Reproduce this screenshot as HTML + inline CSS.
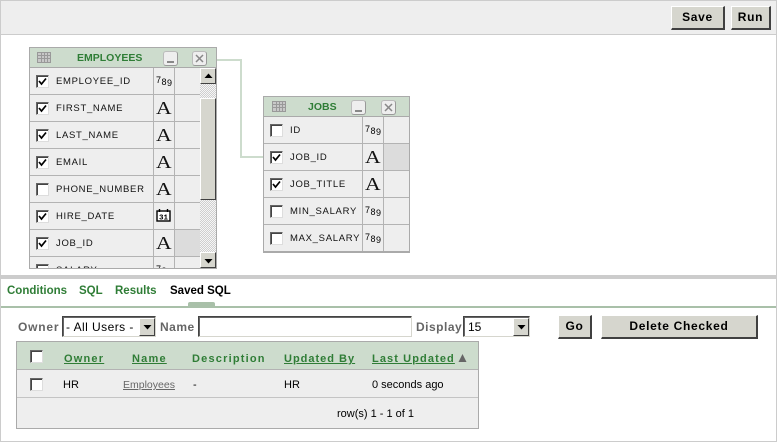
<!DOCTYPE html>
<html><head><meta charset="utf-8">
<style>
html,body{margin:0;padding:0;background:#fff}
#p{position:relative;width:777px;height:442px;overflow:hidden;background:#fff;font-family:"Liberation Sans",sans-serif;font-size:11px;color:#000}
#p div,#p span.a,#p svg{position:absolute}
.t{white-space:nowrap;line-height:12px}
.btn{background:#d6d6ce;border-top:1px solid #fff;border-left:1px solid #fff;border-right:2px solid #404040;border-bottom:2px solid #404040;box-sizing:border-box;text-align:center;font-weight:bold;font-size:12px;letter-spacing:.7px;color:#000}
.cb{width:13px;height:13px;box-sizing:border-box;background:#fff;border-top:1px solid #666;border-left:1px solid #666;border-right:1px solid #ddd;border-bottom:1px solid #ddd;box-shadow:inset 1px 1px 0 #444}
.cn{font-size:9.5px;letter-spacing:.7px;color:#111}
.A{font-family:"Liberation Serif",serif;font-size:18px;line-height:20px;color:#111;transform:translateY(-1px) scaleX(1.2);transform-origin:left top}
.n{font-size:9px;color:#000;letter-spacing:.5px}
.n span{position:relative}
.n span.s{top:-2px}
.n span.d{top:1px}
.tab{font-weight:bold;font-size:11.5px;color:#2f7d36}
.th{font-weight:bold;font-size:11px;letter-spacing:1.2px;color:#2f7d36}
.u{text-decoration:underline}
.dith{background-image:repeating-conic-gradient(#cfcfcf 0 25%,#f6f6f6 0 50%);background-size:2px 2px}
.sb{background:#d6d6ce;border-top:1px solid #fff;border-left:1px solid #fff;border-right:1px solid #404040;border-bottom:1px solid #404040;box-sizing:border-box}
.ms{background:#eee;border:1px solid #bbb;border-right-color:#999;border-bottom-color:#999;border-radius:3px;box-sizing:border-box}
.inp{box-sizing:border-box;background:#fff;border-top:1px solid #444;border-left:1px solid #444;border-right:1px solid #d6d6ce;border-bottom:1px solid #d6d6ce;box-shadow:inset 1px 1px 0 #666}
.lb{font-weight:bold;font-size:12px;letter-spacing:.5px;color:#666}
</style></head><body><div id="p">

<!-- outer -->
<div style="left:0;top:0;width:777px;height:35px;background:#eee"></div>
<div style="left:0;top:0;width:777px;height:1px;background:#ccc"></div>
<div style="left:0;top:34px;width:777px;height:1px;background:#ccc"></div>
<div style="left:0;top:0;width:1px;height:442px;background:#ccc"></div>
<div style="left:776px;top:0;width:1px;height:442px;background:#ccc"></div>
<div style="left:0;top:441px;width:777px;height:1px;background:#ccc"></div>

<div class="btn" style="left:671px;top:6px;width:54px;height:24px;line-height:21px">Save</div>
<div class="btn" style="left:731px;top:6px;width:40px;height:24px;line-height:21px">Run</div>

<!-- connector -->
<div style="left:217px;top:59px;width:25px;height:2px;background:#cddccd"></div>
<div style="left:240px;top:59px;width:2px;height:99px;background:#cddccd"></div>
<div style="left:240px;top:156px;width:24px;height:2px;background:#cddccd"></div>

<!-- EMPLOYEES -->
<div style="left:29px;top:47px;width:188px;height:222px;background:#eee;overflow:hidden;box-sizing:border-box;border:1px solid #aaa">
 <div style="left:0;top:0;width:186px;height:19px;background:#cddccd"></div>
 <div style="left:0;top:19px;width:186px;height:1px;background:#aaa"></div>
 <div style="left:0;top:46px;width:170px;height:1px;background:#b3b3b3"></div>
 <div style="left:0;top:73px;width:170px;height:1px;background:#b3b3b3"></div>
 <div style="left:0;top:100px;width:170px;height:1px;background:#b3b3b3"></div>
 <div style="left:0;top:127px;width:170px;height:1px;background:#b3b3b3"></div>
 <div style="left:0;top:154px;width:170px;height:1px;background:#b3b3b3"></div>
 <div style="left:0;top:181px;width:170px;height:1px;background:#b3b3b3"></div>
 <div style="left:0;top:208px;width:170px;height:1px;background:#b3b3b3"></div>
 <div style="left:123px;top:20px;width:1px;height:200px;background:#b3b3b3"></div>
 <div style="left:144px;top:20px;width:1px;height:200px;background:#b3b3b3"></div>
 <div style="left:145px;top:182px;width:25px;height:26px;background:#dcdcdc"></div>

 <svg style="left:7px;top:4px" width="14" height="11" viewBox="0 0 14 11"><rect x=".5" y=".5" width="13" height="10" fill="#c8c8c8" stroke="#999"/><path d="M1 3.5H13M1 6.5H13M4.5 1V10M7.5 1V10M10.5 1V10" stroke="#999"/></svg>
 <div class="t" style="left:47px;top:4px;font-weight:bold;font-size:10.5px;color:#2f7d36">EMPLOYEES</div>
 <div class="ms" style="left:133px;top:3px;width:15px;height:15px"><div style="left:3px;top:9px;width:7px;height:2px;background:#888"></div></div>
 <div class="ms" style="left:162px;top:3px;width:15px;height:15px"><svg style="left:2px;top:2px" width="10" height="9"><path d="M1 1L8 8M8 1L1 8" stroke="#888" stroke-width="1.5"/></svg></div>

 <!-- rows -->
 <div style="left:0;top:1px;width:170px;height:220px">
 <div class="cb" style="left:6px;top:26px"></div><svg style="left:6px;top:26px" width="13" height="13"><path d="M3 6L5.5 9L10 3.5" stroke="#000" stroke-width="1.7" fill="none"/></svg>
 <div class="t cn" style="left:26px;top:27px">EMPLOYEE_ID</div><div class="t n" style="left:126px;top:27px"><span class="s">7</span>8<span class="d">9</span></div>

 <div class="cb" style="left:6px;top:53px"></div><svg style="left:6px;top:53px" width="13" height="13"><path d="M3 6L5.5 9L10 3.5" stroke="#000" stroke-width="1.7" fill="none"/></svg>
 <div class="t cn" style="left:26px;top:54px">FIRST_NAME</div><div class="t A" style="left:126px;top:50px">A</div>

 <div class="cb" style="left:6px;top:80px"></div><svg style="left:6px;top:80px" width="13" height="13"><path d="M3 6L5.5 9L10 3.5" stroke="#000" stroke-width="1.7" fill="none"/></svg>
 <div class="t cn" style="left:26px;top:81px">LAST_NAME</div><div class="t A" style="left:126px;top:77px">A</div>

 <div class="cb" style="left:6px;top:107px"></div><svg style="left:6px;top:107px" width="13" height="13"><path d="M3 6L5.5 9L10 3.5" stroke="#000" stroke-width="1.7" fill="none"/></svg>
 <div class="t cn" style="left:26px;top:108px">EMAIL</div><div class="t A" style="left:126px;top:104px">A</div>

 <div class="cb" style="left:6px;top:134px"></div>
 <div class="t cn" style="left:26px;top:135px">PHONE_NUMBER</div><div class="t A" style="left:126px;top:131px">A</div>

 <div class="cb" style="left:6px;top:161px"></div><svg style="left:6px;top:161px" width="13" height="13"><path d="M3 6L5.5 9L10 3.5" stroke="#000" stroke-width="1.7" fill="none"/></svg>
 <div class="t cn" style="left:26px;top:162px">HIRE_DATE</div>
 <svg style="left:126px;top:160px" width="15" height="13" viewBox="0 0 15 13"><rect x="1" y="2" width="13" height="10" fill="#fff" stroke="#000" stroke-width="1.4"/><path d="M3.5 0V3M11.5 0V3" stroke="#000" stroke-width="1.4"/><text x="7.5" y="10.5" font-family="Liberation Mono" font-size="7.5" font-weight="bold" text-anchor="middle">31</text></svg>

 <div class="cb" style="left:6px;top:188px"></div><svg style="left:6px;top:188px" width="13" height="13"><path d="M3 6L5.5 9L10 3.5" stroke="#000" stroke-width="1.7" fill="none"/></svg>
 <div class="t cn" style="left:26px;top:189px">JOB_ID</div><div class="t A" style="left:126px;top:185px">A</div>

 <div class="cb" style="left:6px;top:215px"></div>
 <div class="t cn" style="left:26px;top:216px">SALARY</div><div class="t n" style="left:126px;top:216px"><span class="s">7</span>8<span class="d">9</span></div>
 </div>

 <!-- scrollbar -->
 <div class="dith" style="left:170px;top:20px;width:16px;height:200px"></div>
 <div class="sb" style="left:170px;top:20px;width:16px;height:16px"><svg style="left:3px;top:4px" width="9" height="6"><path d="M4.5 0.5L8.5 5H0.5Z" fill="#000"/></svg></div>
 <div class="sb" style="left:170px;top:50px;width:16px;height:102px"></div>
 <div class="sb" style="left:170px;top:204px;width:16px;height:16px"><svg style="left:3px;top:5px" width="9" height="6"><path d="M4.5 5.5L8.5 1H0.5Z" fill="#000"/></svg></div>
</div>

<!-- JOBS -->
<div style="left:263px;top:96px;width:147px;height:157px;background:#eee;overflow:hidden;box-sizing:border-box;border:1px solid #aaa;border-bottom:2px solid #aaa">
 <div style="left:0;top:0;width:145px;height:19px;background:#cddccd"></div>
 <div style="left:0;top:19px;width:145px;height:1px;background:#aaa"></div>
 <div style="left:0;top:46px;width:145px;height:1px;background:#b3b3b3"></div>
 <div style="left:0;top:73px;width:145px;height:1px;background:#b3b3b3"></div>
 <div style="left:0;top:100px;width:145px;height:1px;background:#b3b3b3"></div>
 <div style="left:0;top:127px;width:145px;height:1px;background:#b3b3b3"></div>
 <div style="left:98px;top:20px;width:1px;height:140px;background:#b3b3b3"></div>
 <div style="left:119px;top:20px;width:1px;height:140px;background:#b3b3b3"></div>
 <div style="left:120px;top:47px;width:25px;height:26px;background:#dcdcdc"></div>

 <svg style="left:8px;top:4px" width="14" height="11" viewBox="0 0 14 11"><rect x=".5" y=".5" width="13" height="10" fill="#c8c8c8" stroke="#999"/><path d="M1 3.5H13M1 6.5H13M4.5 1V10M7.5 1V10M10.5 1V10" stroke="#999"/></svg>
 <div class="t" style="left:44px;top:4px;font-weight:bold;font-size:10.5px;color:#2f7d36">JOBS</div>
 <div class="ms" style="left:87px;top:3px;width:15px;height:15px"><div style="left:3px;top:9px;width:7px;height:2px;background:#888"></div></div>
 <div class="ms" style="left:117px;top:3px;width:15px;height:15px"><svg style="left:2px;top:2px" width="10" height="9"><path d="M1 1L8 8M8 1L1 8" stroke="#888" stroke-width="1.5"/></svg></div>

 <div style="left:0;top:1px;width:145px;height:155px">
 <div class="cb" style="left:6px;top:26px"></div>
 <div class="t cn" style="left:26px;top:27px">ID</div><div class="t n" style="left:101px;top:27px"><span class="s">7</span>8<span class="d">9</span></div>

 <div class="cb" style="left:6px;top:53px"></div><svg style="left:6px;top:53px" width="13" height="13"><path d="M3 6L5.5 9L10 3.5" stroke="#000" stroke-width="1.7" fill="none"/></svg>
 <div class="t cn" style="left:26px;top:54px">JOB_ID</div><div class="t A" style="left:101px;top:50px">A</div>

 <div class="cb" style="left:6px;top:80px"></div><svg style="left:6px;top:80px" width="13" height="13"><path d="M3 6L5.5 9L10 3.5" stroke="#000" stroke-width="1.7" fill="none"/></svg>
 <div class="t cn" style="left:26px;top:81px">JOB_TITLE</div><div class="t A" style="left:101px;top:77px">A</div>

 <div class="cb" style="left:6px;top:107px"></div>
 <div class="t cn" style="left:26px;top:108px">MIN_SALARY</div><div class="t n" style="left:101px;top:108px"><span class="s">7</span>8<span class="d">9</span></div>

 <div class="cb" style="left:6px;top:134px"></div>
 <div class="t cn" style="left:26px;top:135px">MAX_SALARY</div><div class="t n" style="left:101px;top:135px"><span class="s">7</span>8<span class="d">9</span></div>
 </div>
</div>

<!-- splitter -->
<div style="left:0;top:275px;width:777px;height:4px;background:#ccc"></div>

<!-- tabs -->
<div class="t tab" style="left:7px;top:285px">Conditions</div>
<div class="t tab" style="left:79px;top:285px">SQL</div>
<div class="t tab" style="left:115px;top:285px">Results</div>
<div class="t tab" style="left:170px;top:285px;color:#000">Saved SQL</div>
<div style="left:1px;top:306px;width:775px;height:2px;background:#a9c0a9"></div>
<div style="left:188px;top:302px;width:27px;height:4px;background:#a9c0a9;border-radius:2px 2px 0 0"></div>

<!-- filter -->
<div class="t lb" style="left:18px;top:321px;letter-spacing:.8px">Owner</div>
<div class="inp" style="left:62px;top:316px;width:94px;height:21px"></div>
<div class="t" style="left:66px;top:321px;font-size:12px;letter-spacing:.45px">- All Users -</div>
<div class="sb" style="left:139px;top:318px;width:16px;height:18px"><svg style="left:3px;top:5px" width="9" height="6"><path d="M4.5 5.5L8.5 1H0.5Z" fill="#000"/></svg></div>
<div class="t lb" style="left:160px;top:321px">Name</div>
<div class="inp" style="left:198px;top:316px;width:214px;height:21px"></div>
<div class="t lb" style="left:416px;top:321px">Display</div>
<div class="inp" style="left:463px;top:316px;width:67px;height:21px"></div>
<div class="t" style="left:468px;top:321px;font-size:12px">15</div>
<div class="sb" style="left:513px;top:318px;width:16px;height:18px"><svg style="left:3px;top:5px" width="9" height="6"><path d="M4.5 5.5L8.5 1H0.5Z" fill="#000"/></svg></div>

<div class="btn" style="left:558px;top:315px;width:34px;height:24px;line-height:21px">Go</div>
<div class="btn" style="left:601px;top:315px;width:157px;height:24px;line-height:21px;letter-spacing:.7px">Delete Checked</div>

<!-- report -->
<div style="left:16px;top:341px;width:463px;height:88px;box-sizing:border-box;background:#eee;border:1px solid #aaa"></div>
<div style="left:17px;top:342px;width:461px;height:27px;background:#cddccd"></div>
<div style="left:17px;top:369px;width:461px;height:1px;background:#b3b3b3"></div>
<div style="left:17px;top:397px;width:461px;height:1px;background:#c4c4c4"></div>

<div class="cb" style="left:30px;top:350px"></div>
<div class="t th u" style="left:64px;top:353px">Owner</div>
<div class="t th u" style="left:132px;top:353px">Name</div>
<div class="t th" style="left:192px;top:353px">Description</div>
<div class="t th u" style="left:284px;top:353px;letter-spacing:1px">Updated By</div>
<div class="t th u" style="left:372px;top:353px;letter-spacing:1.1px">Last Updated</div>
<svg style="left:458px;top:354px" width="9" height="8"><path d="M4.5 0L8.5 8H0.5Z" fill="#666"/></svg>

<div class="cb" style="left:30px;top:378px"></div>
<div class="t" style="left:63px;top:379px">HR</div>
<div class="t u" style="left:123px;top:379px;color:#666;font-size:10.5px">Employees</div>
<div class="t" style="left:193px;top:379px">-</div>
<div class="t" style="left:284px;top:379px">HR</div>
<div class="t" style="left:372px;top:379px">0 seconds ago</div>
<div class="t" style="left:337px;top:408px">row(s) 1 - 1 of 1</div>

</div></body></html>
